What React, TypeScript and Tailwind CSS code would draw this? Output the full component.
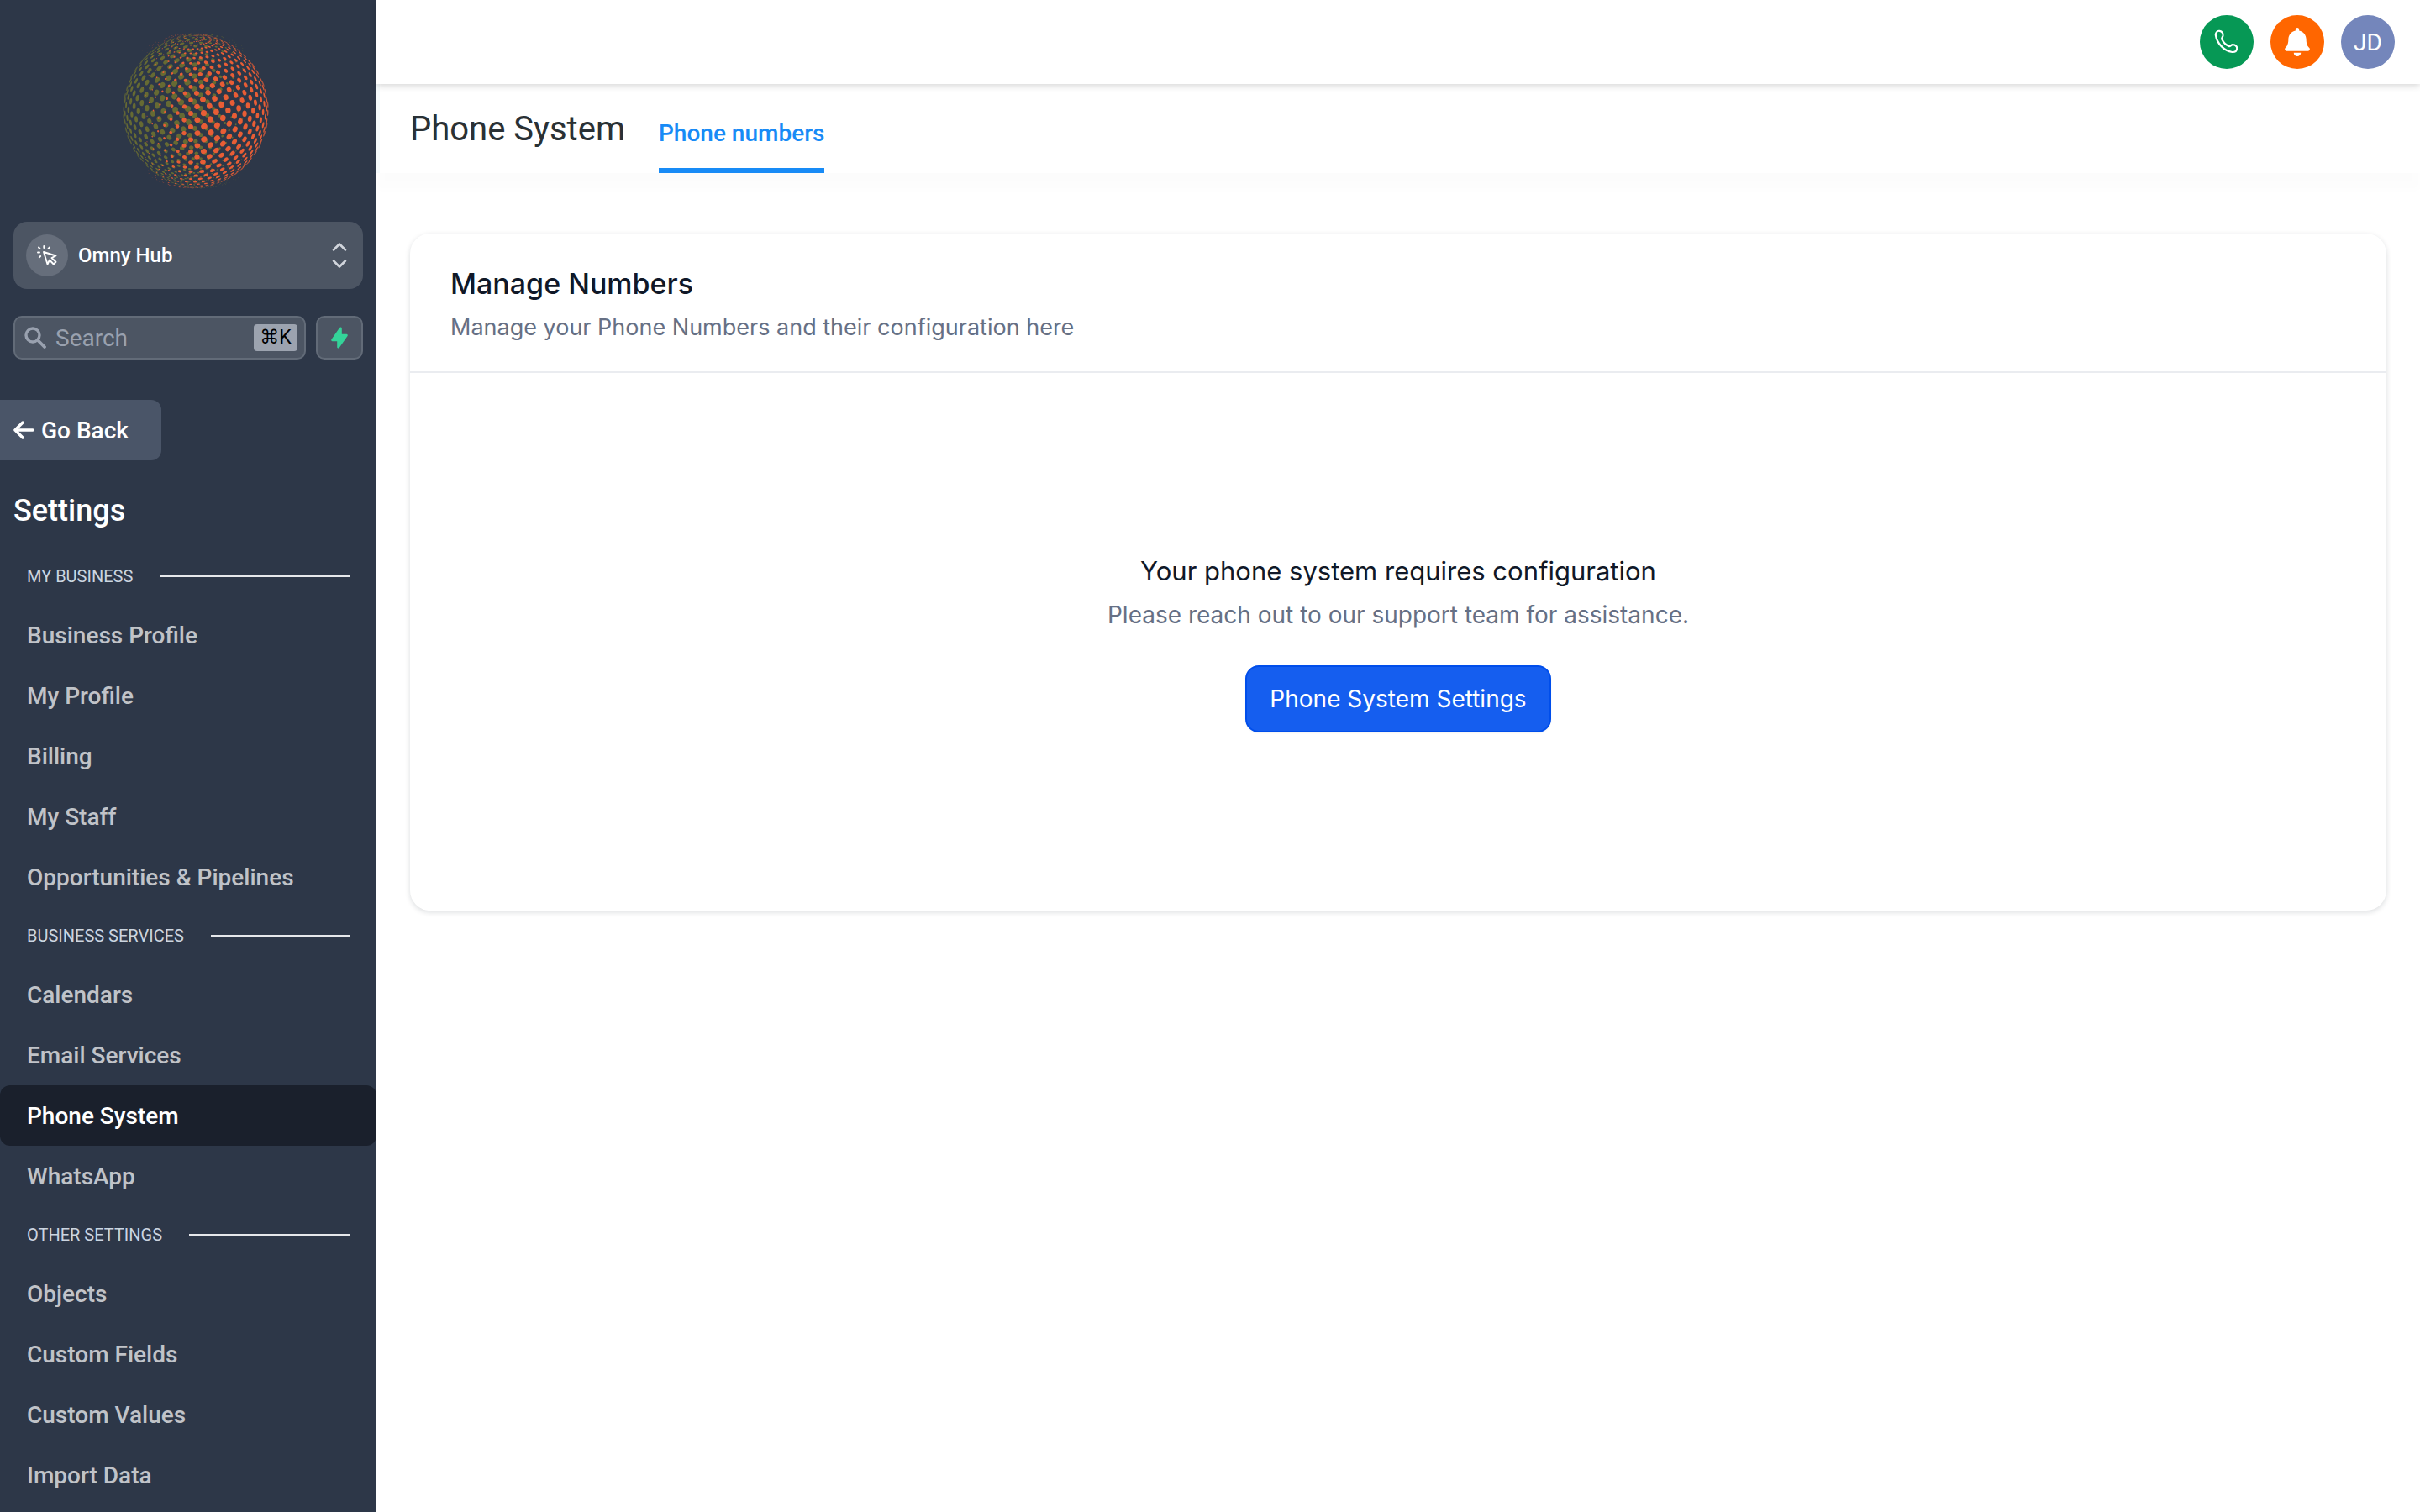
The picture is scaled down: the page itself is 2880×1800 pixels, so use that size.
import { useState } from 'react'
import { ChevronDown, ChevronUp } from 'lucide-react'
import { FaBell } from 'react-icons/fa'
import { HiLightningBolt } from 'react-icons/hi'

interface Dot {
  x: number
  y: number
  rx: number
  ry: number
  angle: number
  opacity: number
}

interface NavSection {
  title: string
  items: string[]
}

const sections: NavSection[] = [
  {
    title: 'My Business',
    items: ['Business Profile', 'My Profile', 'Billing', 'My Staff', 'Opportunities & Pipelines'],
  },
  {
    title: 'Business Services',
    items: ['Calendars', 'Email Services', 'Phone System', 'WhatsApp'],
  },
  {
    title: 'Other Settings',
    items: ['Objects', 'Custom Fields', 'Custom Values', 'Import Data'],
  },
]

// Staggered dots on a tilted globe, seen from the front. The dots shrink
// towards the left side.
function globeDots(): Dot[] {
  const dots: Dot[] = []
  const steps = 36
  const tilt = 0.294
  for (let i = 1; i < steps; i++) {
    const lat = ((i - steps / 2) * Math.PI) / steps
    for (let j = 0; j < steps; j++) {
      const lon = ((j + (i % 2 === 0 ? 0.5 : 0)) * 2 * Math.PI) / steps
      const x = Math.cos(lat) * Math.sin(lon)
      const front = Math.cos(lat) * Math.cos(lon)
      const y = Math.sin(lat) * Math.cos(tilt) + front * Math.sin(tilt)
      const z = front * Math.cos(tilt) - Math.sin(lat) * Math.sin(tilt)
      const fade = Math.min(1, (x + 0.7) / 0.85)
      if (z < 0 || fade <= 0) continue
      const size = 3.7 * fade * (0.15 + 0.85 * Math.cos(lat))
      dots.push({
        x: 92 * x,
        y: 92 * y,
        rx: size * Math.max(z, 0.22),
        ry: size,
        angle: (Math.atan2(y, x) * 180) / Math.PI,
        opacity: Math.min(1, 0.65 + z * 1.5),
      })
    }
  }
  return dots
}

const dots = globeDots()

function Globe({ transform, fill }: { transform: string; fill: string }) {
  return (
    <g transform={transform} fill={fill}>
      {dots.map((d, i) => (
        <ellipse
          key={i}
          rx={d.rx}
          ry={d.ry}
          opacity={d.opacity}
          transform={`translate(${d.x} ${d.y}) rotate(${d.angle})`}
        />
      ))}
    </g>
  )
}

function Logo() {
  return (
    <svg viewBox="0 0 186 192" className="h-[192px] w-[186px]" role="img" aria-label="Omny Hub">
      <Globe transform="translate(99 96) rotate(180)" fill="#666a33" />
      <Globe transform="translate(87 96)" fill="#e85d35" />
    </svg>
  )
}

function CursorIcon() {
  return (
    <svg viewBox="0 0 24 24" className="size-6" fill="none" stroke="currentColor" strokeWidth="1.9" strokeLinecap="round" strokeLinejoin="round">
      <path d="M8 8L22.5 12.5L17.5 15L22.5 19.8L19.8 22.5L15 17.5L12.5 22.5Z" />
      <path d="M8.3 1V3M15 2.5L13.5 4M2 2.5L3.5 4M1 8.5H3M4.2 13L2.8 14.4" />
    </svg>
  )
}

function PhoneIcon() {
  return (
    <svg viewBox="0 0 30 30" className="size-[30px]" fill="none" stroke="currentColor" strokeWidth="2.2" strokeLinejoin="round">
      <path d="M1.8 6.5C1.8 3 4.5 1.5 6.5 1.8C9.5 2.2 11 5 10.5 7.5C10 9.5 8.6 9.8 9.3 11.8C10.8 15 14 18.5 17.5 20C19.3 20.7 20 18.2 22.3 18.2C25.5 18.2 27.5 20.5 27.2 22.8C26.8 25.5 24.5 27.2 21.5 27C12 25.5 3.3 17 1.8 6.5Z" />
    </svg>
  )
}

function BackIcon() {
  return (
    <svg viewBox="0 0 26 24" className="h-6 w-[26px]" fill="none" stroke="currentColor" strokeWidth="3.5" strokeLinecap="round" strokeLinejoin="round">
      <path d="M11 2L2 11L11 20M2 11H23" />
    </svg>
  )
}

function SearchIcon() {
  return (
    <svg viewBox="0 0 26 26" className="size-[26px] shrink-0" fill="none" stroke="currentColor" strokeWidth="3.4" strokeLinecap="round">
      <circle cx="10" cy="10" r="8" />
      <path d="M16 16L24 24" strokeWidth="3.8" />
    </svg>
  )
}

function Sidebar() {
  const [active, setActive] = useState('Phone System')

  return (
    <aside className="h-screen w-[448px] shrink-0 overflow-hidden bg-[#2d3748]">
      <div className="flex justify-center pt-9 pl-[18px]">
        <Logo />
      </div>

      <div className="mt-9 px-4">
        <button className="flex h-20 w-full items-center rounded-2xl bg-[#4c5563] pr-[14px] pl-[15px] text-white">
          <span className="flex size-[50px] items-center justify-center rounded-full bg-[#666e7b]">
            <CursorIcon />
          </span>
          <span className="ml-3 text-[24px] font-medium">Omny Hub</span>
          <span className="ml-auto flex flex-col text-gray-300">
            <ChevronUp className="size-7" strokeWidth={2.2} />
            <ChevronDown className="-mt-2 size-7" strokeWidth={2.2} />
          </span>
        </button>

        <div className="mt-8 flex gap-3">
          <label className="flex h-[52px] min-w-0 flex-1 items-center rounded-[10px] border-2 border-[#626b78] bg-[#4c5563] pr-2 pl-[11px] text-gray-400">
            <SearchIcon />
            <input
              type="text"
              aria-label="Search"
              placeholder="Search"
              className="ml-[11px] w-full min-w-0 bg-transparent pt-0.5 text-[28px] text-white outline-none placeholder:text-gray-400"
            />
            <kbd className="flex h-8 w-[52px] shrink-0 items-center justify-center rounded bg-[#9ca3af] font-['Roboto','DejaVu_Sans',sans-serif] text-[23px] text-black">
              ⌘K
            </kbd>
          </label>
          <button
            aria-label="Quick actions"
            className="flex h-[52px] w-14 items-center justify-center rounded-[10px] border-2 border-[#626b78] bg-[#4c5563] text-[#34d399]"
          >
            <HiLightningBolt className="size-7" />
          </button>
        </div>
      </div>

      <button className="mt-12 flex h-[72px] w-48 items-center gap-[7px] rounded-r-xl bg-[#4a5568] pt-0.5 pl-4 text-[28px] font-medium text-white">
        <BackIcon />
        Go Back
      </button>

      <h2 className="mt-8 mb-4 px-4 text-[36px] leading-[56px] font-medium text-white">Settings</h2>

      <nav>
        {sections.map((section) => (
          <div key={section.title}>
            <div className="flex h-[68px] items-center gap-8 px-8">
              <h3 className="text-[20px] text-[#cbd5e0] uppercase">{section.title}</h3>
              <div className="h-0.5 flex-1 bg-gray-200" />
            </div>
            {section.items.map((item) => (
              <a
                key={item}
                href="#"
                onClick={() => setActive(item)}
                className={
                  item === active
                    ? 'flex h-[72px] items-center rounded-xl bg-[#1a202c] px-8 pt-0.5 text-[28px] font-medium text-white'
                    : 'flex h-[72px] items-center rounded-xl px-8 pt-0.5 text-[28px] font-medium text-[#c0c3c8]'
                }
              >
                {item}
              </a>
            ))}
          </div>
        ))}
      </nav>
    </aside>
  )
}

export default function App() {
  return (
    <div className="flex h-screen overflow-hidden bg-white font-['Roboto',sans-serif]">
      <Sidebar />

      <div className="flex min-w-0 flex-1 flex-col">
        <header className="z-10 flex h-[100px] items-center justify-end gap-5 bg-white pr-[30px] shadow-[0_2px_8px_rgba(0,0,0,0.17)]">
          <button aria-label="Call" className="flex size-16 items-center justify-center rounded-full bg-[#069855] text-white">
            <PhoneIcon />
          </button>
          <button aria-label="Notifications" className="flex size-16 items-center justify-center rounded-full bg-[#ff6600] text-white">
            <FaBell className="size-[34px]" />
          </button>
          <button className="flex size-16 items-center justify-center rounded-full bg-[#7486bb] pt-0.5 text-[28px] text-white">
            JD
          </button>
        </header>

        <div className="flex h-[106px] gap-10 border-l-4 border-[#f4fafc] bg-white pl-9 shadow-[0_20px_8px_rgba(0,0,0,0.01)]">
          <h1 className="pt-[26px] text-[40px] leading-[56px] text-[#2a3135]">Phone System</h1>
          <a
            href="#"
            className="border-b-[6px] border-[#188bf6] pt-[39px] text-[28px] leading-10 font-medium text-[#188bf6]"
          >
            Phone numbers
          </a>
        </div>

        <main className="px-10 pt-[72px] font-['Inter',sans-serif]">
          <section className="rounded-3xl bg-white shadow-[0_2px_6px_rgba(16,24,40,0.15)]">
            <div className="border-b-2 border-[#eaecf0] px-12 pt-9 pb-8">
              <h2 className="text-[34px] leading-[48px] font-medium text-[#101828]">Manage Numbers</h2>
              <p className="mt-2 text-[27px] leading-10 text-[#667085]">
                Manage your Phone Numbers and their configuration here
              </p>
            </div>
            <div className="flex flex-col items-center py-[212px]">
              <h3 className="text-[31px] leading-[48px] text-[#101828]">Your phone system requires configuration</h3>
              <p className="mt-2 text-[28px] leading-10 text-[#667085]">
                Please reach out to our support team for assistance.
              </p>
              <button className="mt-10 h-20 rounded-2xl border-2 border-[#004eeb] bg-[#155eef] px-[27px] text-[28px] text-white shadow-xs">
                Phone System Settings
              </button>
            </div>
          </section>
        </main>
      </div>
    </div>
  )
}
